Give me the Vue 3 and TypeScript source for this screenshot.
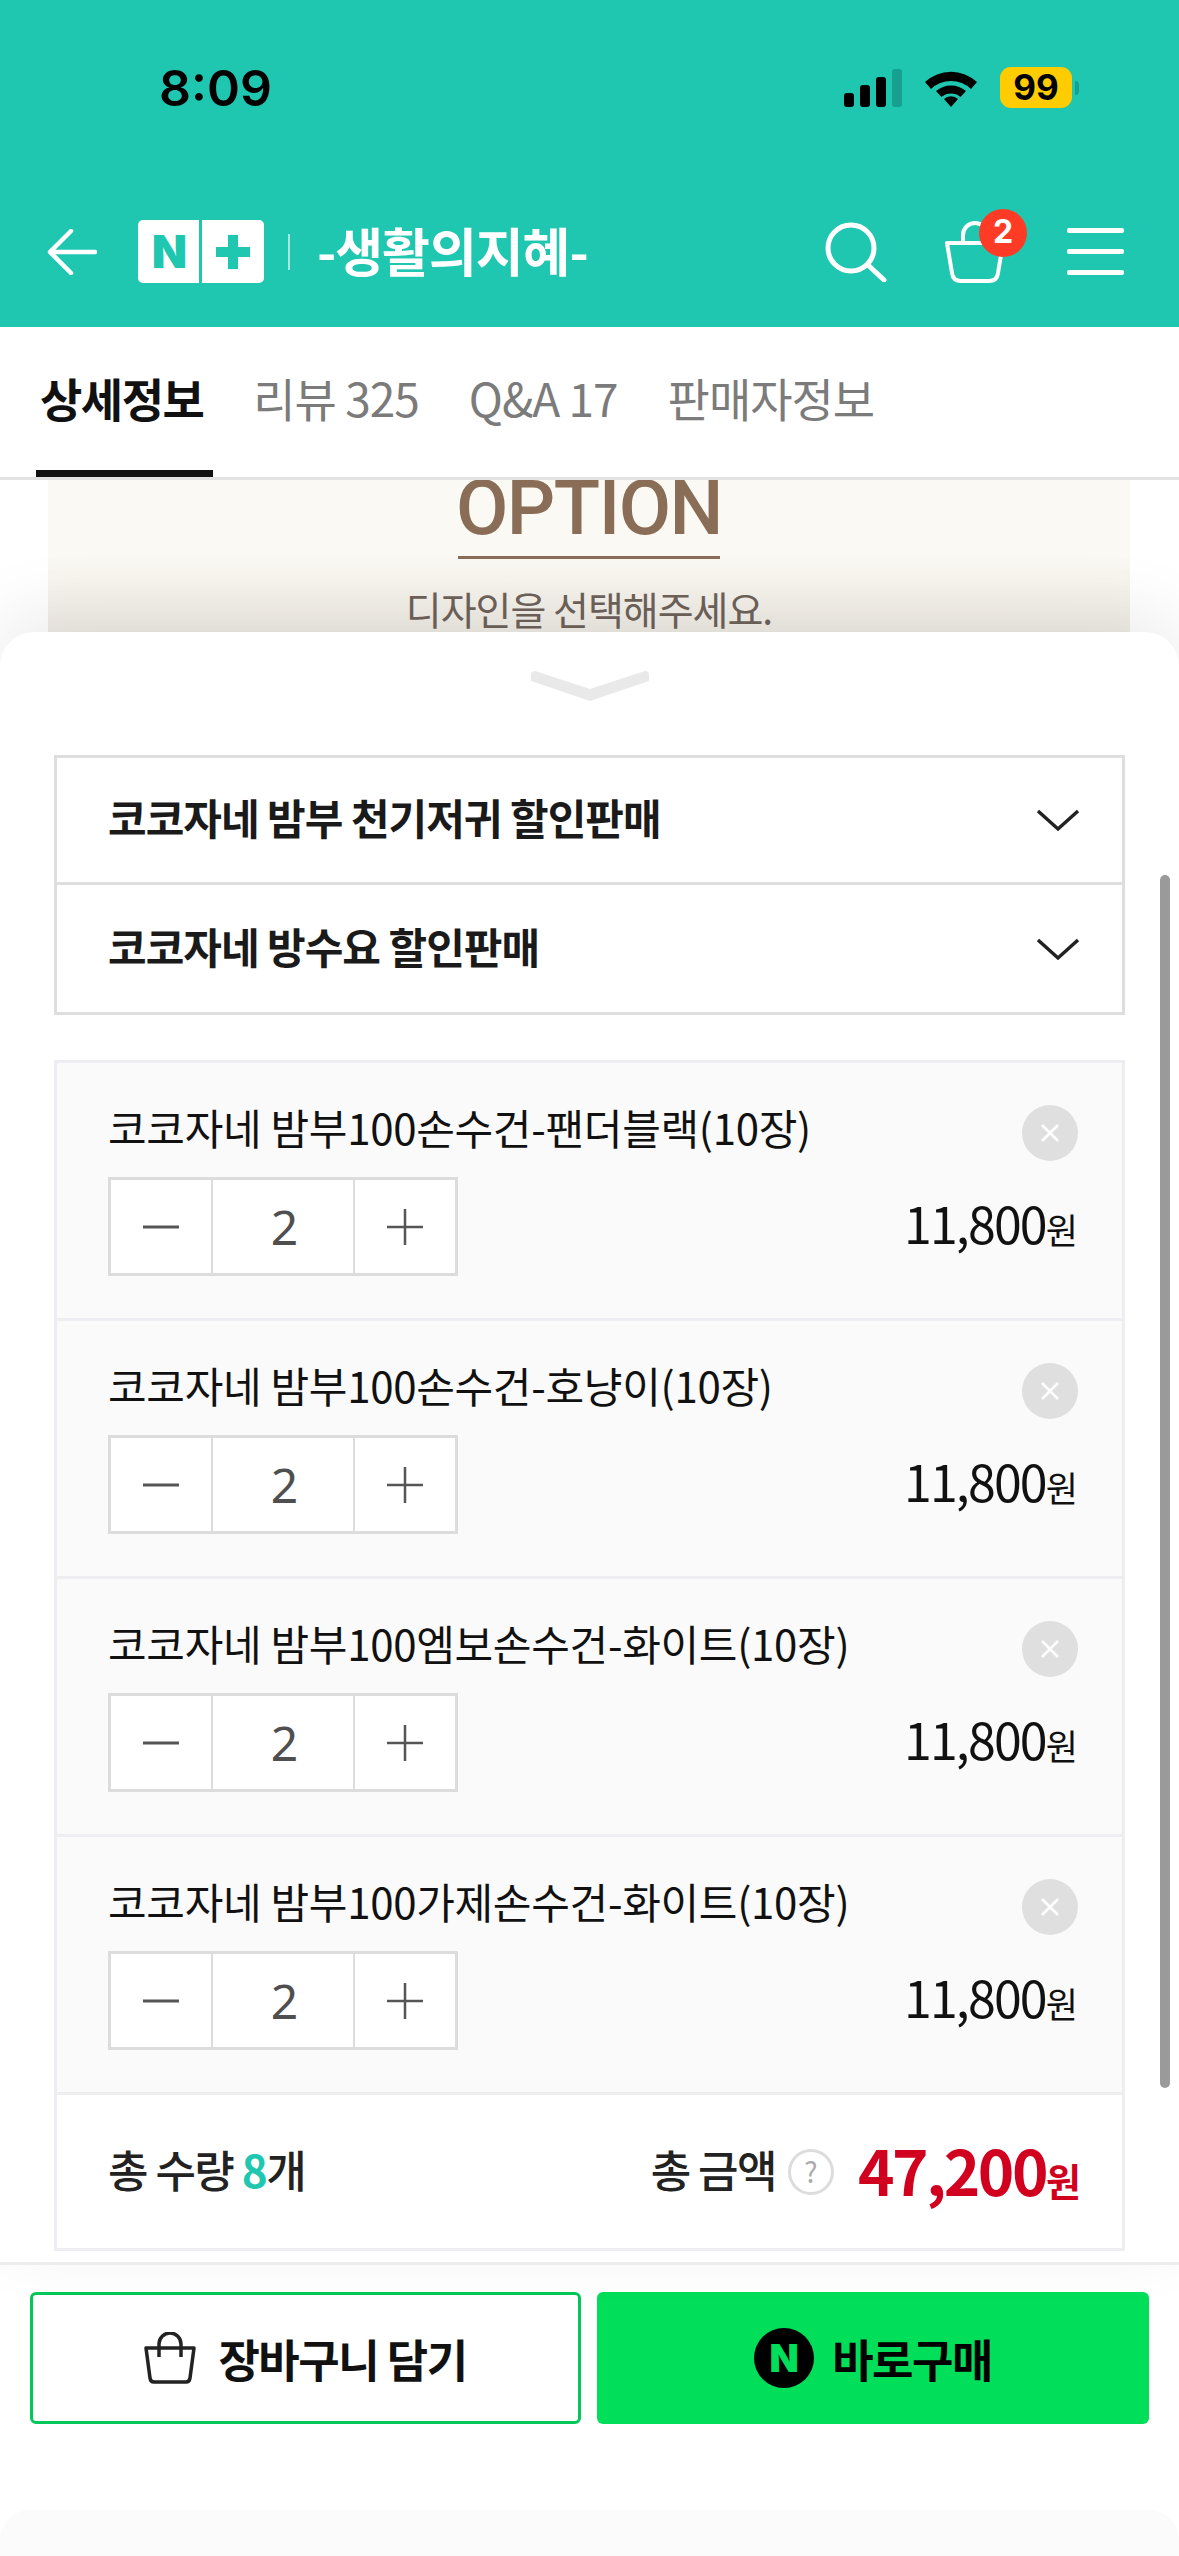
<template>
  <div class="phone">
    <header class="top">
      <div class="status">
        <span class="time">8:09</span>
        <div class="status-right">
          <svg width="58" height="38" viewBox="0 0 58 38">
            <rect x="0" y="24" width="10" height="14" rx="3" fill="#000" />
            <rect x="16" y="16" width="10" height="22" rx="3" fill="#000" />
            <rect x="32" y="8" width="10" height="30" rx="3" fill="#000" />
            <rect x="48" y="0" width="10" height="38" rx="3" fill="#17a08f" />
          </svg>
          <svg class="wifi" width="52" height="38" viewBox="0 0 52 38">
            <path d="M0 13 A38 38 0 0 1 52 13 L46 20 A29 29 0 0 0 6 20 Z" fill="#000" />
            <path d="M11 25 A23 23 0 0 1 41 25 L35.500 31 A15 15 0 0 0 16.500 31 Z" fill="#000" transform="translate(0 -3)" />
            <path d="M19 30 A10 10 0 0 1 33 30 L26 38 Z" fill="#000" />
          </svg>
          <span class="battery">99</span>
          <span class="battery-nub"></span>
        </div>
      </div>
      <nav class="nav">
        <svg class="back" width="50" height="46" viewBox="0 0 50 46">
          <path d="M24 2 L3 23 L24 44 M3 23 H48" fill="none" stroke="#fff" stroke-width="4.500" stroke-linecap="round" stroke-linejoin="round" />
        </svg>
        <div class="logo">
          <span class="logo-n">N</span>
          <span class="logo-plus">
            <svg width="34" height="34" viewBox="0 0 34 34"><path d="M12 0 H22 V12 H34 V22 H22 V34 H12 V22 H0 V12 H12 Z" fill="#20c7b0" /></svg>
          </span>
        </div>
        <span class="logo-sep"></span>
        <span class="store">-생활의지혜-</span>
        <div class="nav-icons">
          <svg width="62" height="60" viewBox="0 0 62 60">
            <circle cx="26" cy="26" r="23" fill="none" stroke="#fff" stroke-width="5" />
            <path d="M43 43 L59 58" stroke="#fff" stroke-width="5" stroke-linecap="round" />
          </svg>
          <div class="cart">
            <svg width="60" height="62" viewBox="0 0 60 62">
              <path d="M18 22 V14 A12 12 0 0 1 42 14 V22" fill="none" stroke="#fff" stroke-width="4" />
              <path d="M2 22 H58 L53 52 Q52 60 44 60 H16 Q8 60 7 52 Z" fill="none" stroke="#fff" stroke-width="4" stroke-linejoin="round" />
            </svg>
            <span class="badge">2</span>
          </div>
          <div class="menu"><i></i><i></i><i></i></div>
        </div>
      </nav>
    </header>

    <div class="tabs">
      <span
        v-for="tab in tabs"
        :key="tab"
        class="tab"
        :class="{ active: tab === '상세정보' }"
      >{{ tab }}</span>
    </div>

    <div class="banner">
      <div class="option-title">OPTION</div>
      <div class="option-line"></div>
      <div class="option-sub">디자인을 선택해주세요.</div>
    </div>

    <section class="sheet">
      <div class="handle">
        <svg width="118" height="30" viewBox="0 0 118 30">
          <path d="M4 0 L59 18 L114 0 Q118 0 118 4 V10 L59 30 L0 10 V4 Q0 0 4 0 Z" fill="#e9e9e9" />
        </svg>
      </div>

      <div class="selects">
        <div v-for="s in selects" :key="s" class="select">
          <span class="select-name">{{ s }}</span>
          <svg width="44" height="24" viewBox="0 0 44 24">
            <path d="M2 3 L22 21 L42 3" fill="none" stroke="#222" stroke-width="3.500" />
          </svg>
        </div>
      </div>

      <div class="order">
        <div v-for="item in items" :key="item" class="item">
          <div class="item-top">
            <span class="item-name">{{ item }}</span>
            <span class="remove">
              <svg width="22" height="22" viewBox="0 0 22 22">
                <path d="M3 3 L19 19 M19 3 L3 19" stroke="#fff" stroke-width="2.500" />
              </svg>
            </span>
          </div>
          <div class="item-bottom">
            <div class="stepper">
              <span class="step">
                <svg width="36" height="36" viewBox="0 0 36 36"><path d="M0 18 H36" stroke="#555" stroke-width="3" /></svg>
              </span>
              <span class="count">2</span>
              <span class="step">
                <svg width="36" height="36" viewBox="0 0 36 36"><path d="M0 18 H36 M18 0 V36" stroke="#555" stroke-width="2.500" /></svg>
              </span>
            </div>
            <span class="price">11,800<small>원</small></span>
          </div>
        </div>

        <div class="total">
          <span class="total-qty">총 수량 <b>8</b>개</span>
          <div class="total-right">
            <span class="total-label">총 금액</span>
            <span class="help">?</span>
            <span class="total-price">47,200<small>원</small></span>
          </div>
        </div>
      </div>

      <div class="scrollbar"></div>
    </section>

    <footer class="actions">
      <button class="btn btn-cart">
        <svg width="52" height="52" viewBox="0 0 52 52">
          <path d="M15 16 V12 A11 11 0 0 1 37 12 V16" fill="none" stroke="#222" stroke-width="3.500" />
          <path d="M2 16 H50 L46 46 Q45.500 50 42 50 H10 Q6.500 50 6 46 Z" fill="none" stroke="#222" stroke-width="3.500" stroke-linejoin="round" />
          <path d="M15 16 V25 M37 16 V25" stroke="#222" stroke-width="3.500" />
        </svg>
        <span>장바구니 담기</span>
      </button>
      <button class="btn btn-buy">
        <span class="npay">N</span>
        <span>바로구매</span>
      </button>
    </footer>
    <div class="home-area"></div>
  </div>
</template>

<script setup lang="ts">
const tabs = ['상세정보', '리뷰 325', 'Q&A 17', '판매자정보']

const selects = ['코코자네 밤부 천기저귀 할인판매', '코코자네 방수요 할인판매']

const items = [
  '코코자네 밤부100손수건-팬더블랙(10장)',
  '코코자네 밤부100손수건-호냥이(10장)',
  '코코자네 밤부100엠보손수건-화이트(10장)',
  '코코자네 밤부100가제손수건-화이트(10장)',
]
</script>

<style>
html, body { margin: 0; background: #fff; }
</style>

<style scoped>
.phone {
  width: 1179px;
  height: 2556px;
  overflow: hidden;
  position: relative;
  display: flex;
  flex-direction: column;
  background: #fff;
  font-family: "Noto Sans CJK KR", "Noto Sans", sans-serif;
  color: #111;
}
.top {
  background: #20c7b0;
  height: 327px;
  box-sizing: border-box;
  flex: none;
}
.status {
  height: 176px;
  box-sizing: border-box;
  padding: 60px 100px 0 159px;
  display: flex;
  justify-content: space-between;
}
.time {
  font-family: Inter, "Liberation Sans", sans-serif;
  font-size: 50px;
  font-weight: 600;
  line-height: 56px;
  color: #000;
}
.status-right {
  display: flex;
  align-items: flex-start;
  padding-top: 9px;
}
.wifi { margin-left: 23px; }
.battery {
  margin: -2px 0 0 23px;
  width: 72px;
  height: 41px;
  background: #ffcc00;
  border-radius: 11px;
  font-family: Inter, "Liberation Sans", sans-serif;
  font-weight: 700;
  font-size: 35px;
  line-height: 41px;
  text-align: center;
  color: #000;
}
.battery-nub {
  width: 4px;
  height: 14px;
  margin: 12px 0 0 3px;
  background: #17a08f;
  border-radius: 0 4px 4px 0;
}
.nav {
  display: flex;
  align-items: center;
  height: 151px;
  padding-left: 47px;
  padding-right: 55px;
}
.back { margin-right: 41px; }
.logo {
  width: 126px;
  height: 63px;
  background: #fff;
  border-radius: 5px;
  display: grid;
  grid-template-columns: 1fr 1fr;
  position: relative;
  flex: none;
}
.logo::after {
  content: "";
  position: absolute;
  left: 61px;
  top: 0;
  bottom: 0;
  width: 3px;
  background: #20c7b0;
}
.logo-n {
  color: #20c7b0;
  font-family: Inter, "Liberation Sans", sans-serif;
  font-weight: 900;
  font-size: 46px;
  line-height: 63px;
  text-align: center;
}
.logo-plus {
  display: flex;
  align-items: center;
  justify-content: center;
}
.logo-sep {
  width: 2px;
  height: 36px;
  background: rgba(255, 255, 255, 0.6);
  margin: 0 27px 0 24px;
}
.store {
  color: #fff;
  font-size: 52px;
  font-weight: 700;
  letter-spacing: -1px;
  margin-bottom: 4px;
}
.nav-icons {
  margin-left: auto;
  display: flex;
  align-items: center;
}
.cart {
  position: relative;
  margin: 0 62px 0 58px;
  display: flex;
}
.badge {
  position: absolute;
  right: -22px;
  top: -12px;
  width: 48px;
  height: 48px;
  border-radius: 50%;
  background: #ff3b25;
  color: #fff;
  font-family: Inter, "Liberation Sans", sans-serif;
  font-size: 32px;
  font-weight: 700;
  line-height: 46px;
  text-align: center;
}
.menu {
  width: 57px;
  display: flex;
  flex-direction: column;
  gap: 16px;
}
.menu i {
  display: block;
  height: 5px;
  background: #fff;
  border-radius: 2px;
}
.tabs {
  flex: none;
  height: 153px;
  box-sizing: border-box;
  border-bottom: 3px solid #e2e2e2;
  display: flex;
  padding-left: 36px;
  gap: 34px;
  background: #fff;
  position: relative;
  z-index: 2;
}
.tab {
  box-sizing: border-box;
  height: 150px;
  padding: 0 8px;
  line-height: 140px;
  font-size: 46px;
  letter-spacing: -1px;
  color: #7b7b7b;
}
.tab.active {
  color: #111;
  font-weight: 700;
  letter-spacing: -1.500px;
  padding: 0 10px 0 4px;
  margin-right: -2px;
  border-bottom: 7px solid #111;
}
.banner {
  flex: none;
  height: 152px;
  margin: 0 49px 0 48px;
  overflow: hidden;
  background: linear-gradient(#fbf9f3 50%, #f0ece5);
  text-align: center;
  color: #8a6d56;
}
.option-title {
  font-family: Roboto, "Liberation Sans", sans-serif;
  font-size: 76px;
  font-weight: 500;
  line-height: 56px;
  letter-spacing: -1.500px;
  height: 56px;
}
.option-line {
  width: 262px;
  height: 3px;
  margin: 20px auto 0;
  background: #8a6d56;
}
.option-sub {
  font-size: 39px;
  line-height: 46px;
  margin-top: 26px;
  letter-spacing: -1px;
  color: #6e625a;
}
.sheet {
  flex: none;
  position: relative;
  z-index: 1;
  height: 1633px;
  box-sizing: border-box;
  padding: 0 54px;
  background: #fff;
  border-radius: 34px 34px 0 0;
  box-shadow: 0 -20px 70px rgba(0, 0, 0, 0.08);
  border-bottom: 3px solid #ededed;
}
.handle {
  height: 123px;
  box-sizing: border-box;
  padding-top: 39px;
  display: flex;
  justify-content: center;
}
.handle svg { display: block; }
.selects {
  width: 1071px;
}
.select {
  box-sizing: border-box;
  height: 130px;
  border: 3px solid #dedede;
  display: flex;
  align-items: center;
  justify-content: space-between;
  padding: 0 42px 0 51px;
  font-size: 42px;
  font-weight: 700;
  letter-spacing: -1px;
  color: #1a1a1a;
}
.select-name { margin-bottom: 7px; }
.select + .select { border-top: 0; }
.order {
  width: 1071px;
  margin-top: 45px;
  border: 3px solid #eeeef2;
  box-sizing: border-box;
}
.item {
  box-sizing: border-box;
  height: 258px;
  padding: 37px 44px 0 51px;
  background: #fafafa;
  border-bottom: 3px solid #eeeef2;
}
.item-top {
  display: flex;
  justify-content: space-between;
  align-items: center;
  height: 58px;
}
.item-name {
  font-size: 42px;
  letter-spacing: -0.300px;
  color: #111;
  line-height: 58px;
  margin-bottom: 5px;
}
.remove {
  width: 56px;
  height: 56px;
  border-radius: 50%;
  background: #dfdfdf;
  display: flex;
  align-items: center;
  justify-content: center;
  margin-top: 8px;
}
.item-bottom {
  display: flex;
  justify-content: space-between;
  align-items: center;
  margin-top: 19px;
}
.stepper {
  display: flex;
  height: 99px;
  box-sizing: border-box;
  width: 350px;
  border: 3px solid #dcdcdc;
  background: #fff;
}
.step {
  width: 100px;
  display: flex;
  align-items: center;
  justify-content: center;
  flex: none;
}
.count {
  flex: 1;
  box-sizing: border-box;
  padding-left: 3px;
  border-left: 2px solid #dcdcdc;
  border-right: 2px solid #dcdcdc;
  text-align: center;
  line-height: 93px;
  font-size: 48px;
  color: #4f4f4f;
  font-family: "Noto Sans", sans-serif;
}
.price {
  font-size: 50px;
  letter-spacing: -1.800px;
  color: #111;
  margin: 0 1px 10px 0;
}
.price small {
  font-size: 35px;
  letter-spacing: -1px;
}
.total {
  box-sizing: border-box;
  height: 153px;
  background: #fff;
  padding: 0 41px 5px 51px;
  display: flex;
  align-items: center;
  justify-content: space-between;
  font-size: 44px;
  font-weight: 500;
  letter-spacing: -1.500px;
  color: #222;
}
.total-qty b {
  color: #20c7b0;
  font-weight: 700;
}
.total-right {
  display: flex;
  align-items: center;
}
.help {
  box-sizing: border-box;
  width: 46px;
  height: 46px;
  margin: 6px 24px 0 12px;
  border: 3px solid #dcdcdc;
  border-radius: 50%;
  color: #aaa;
  font-size: 28px;
  font-weight: 400;
  line-height: 38px;
  text-align: center;
  letter-spacing: 0;
}
.total-price {
  color: #d2001f;
  font-size: 62px;
  font-weight: 700;
  letter-spacing: -2.500px;
}
.total-price small {
  font-size: 38px;
  letter-spacing: 0;
}
.scrollbar {
  position: absolute;
  left: 1160px;
  top: 243px;
  width: 10px;
  height: 1213px;
  border-radius: 5px;
  background: #9a9a9a;
}
.actions {
  flex: none;
  display: flex;
  gap: 16px;
  padding: 27px 30px 0;
}
.btn {
  width: 551px;
  height: 132px;
  box-sizing: border-box;
  border-radius: 6px;
  display: flex;
  align-items: center;
  justify-content: center;
  font-family: inherit;
  font-size: 45px;
  font-weight: 700;
  letter-spacing: -1.500px;
  color: #111;
  padding: 0;
}
.btn-cart {
  background: #fff;
  border: 3px solid #03c75a;
  gap: 22px;
}
.btn-buy {
  width: 552px;
  background: #00de5a;
  border: 0;
  gap: 18px;
  color: #000;
}
.npay {
  width: 60px;
  height: 60px;
  border-radius: 50%;
  background: #000;
  color: #00de5a;
  font-family: Inter, "Liberation Sans", sans-serif;
  font-weight: 900;
  font-size: 38px;
  line-height: 60px;
  text-align: center;
  letter-spacing: 0;
}
.home-area {
  position: absolute;
  left: 0;
  right: 0;
  top: 2510px;
  bottom: 0;
  border-radius: 30px 30px 0 0;
  background: #fbfbfb;
}
</style>
